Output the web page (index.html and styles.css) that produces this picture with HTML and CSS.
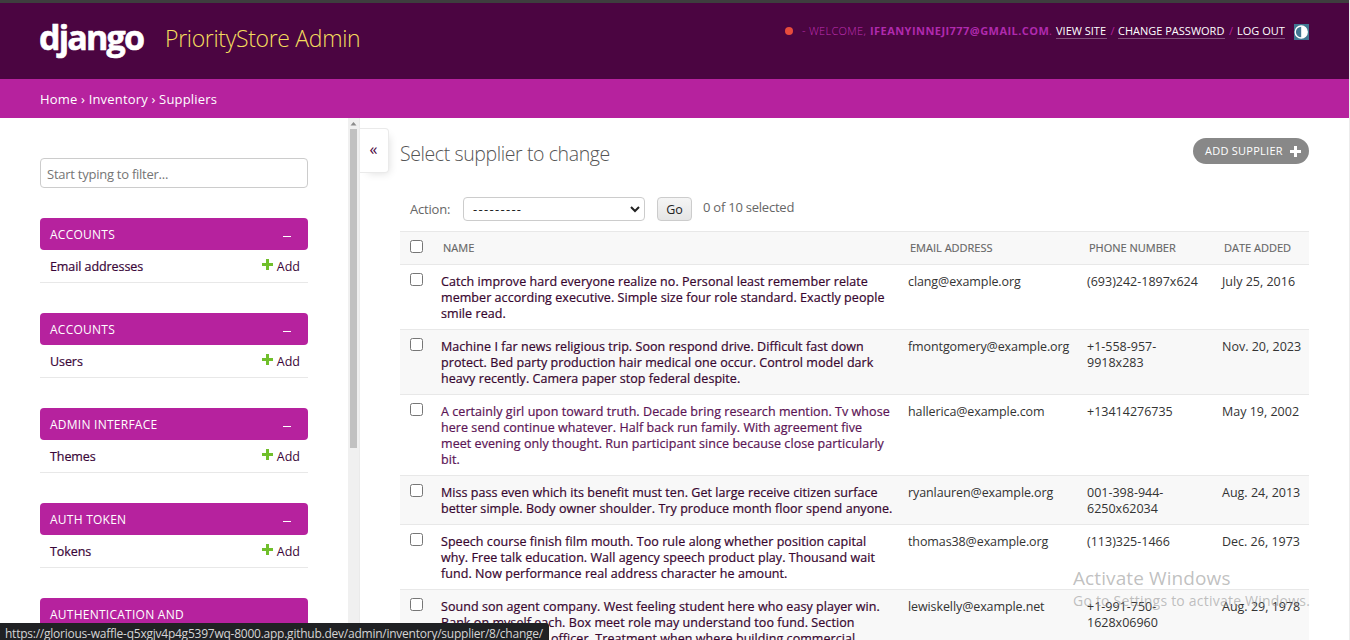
FILE: index.html
```html
<!DOCTYPE html>
<html lang="en">
<head>
<meta charset="utf-8">
<title>Select supplier to change</title>
<link rel="stylesheet" href="styles.css">
</head>
<body>
<div class="page">
<header class="header">
  <div class="branding"><span class="logo">django</span><span class="site-name">PriorityStore Admin</span></div>
  <div class="user-tools"><i class="dot"></i><span class="welcome">- Welcome, </span><strong>ifeanyinneji777@gmail.com</strong><span class="stop">.</span><a class="l1">View site</a><span class="slash">/</span><a class="l2">Change password</a><span class="slash">/</span><a class="l3">Log out</a>
    <svg class="theme" width="15" height="16" viewBox="0 0 15 16"><rect width="15" height="16" fill="#417893"/><circle cx="7.2" cy="8" r="6" fill="none" stroke="#fff" stroke-width="1.4"/><path d="M7.2 2a6 6 0 0 1 0 12z" fill="#fff"/></svg>
  </div>
</header>
<nav class="breadcrumbs">Home › Inventory › Suppliers</nav>
<div class="main">
  <aside class="sidebar">
    <div class="filter">Start typing to filter...</div>
    <section class="module"><h2><span>Accounts</span><b></b></h2><div class="model"><strong>Email addresses</strong><a class="add"><svg width="11" height="11" viewBox="0 0 11 11"><path d="M4 0h3v4h4v3H7v4H4V7H0V4h4z"/></svg>Add</a></div></section>
    <section class="module"><h2><span>Accounts</span><b></b></h2><div class="model"><strong>Users</strong><a class="add"><svg width="11" height="11" viewBox="0 0 11 11"><path d="M4 0h3v4h4v3H7v4H4V7H0V4h4z"/></svg>Add</a></div></section>
    <section class="module"><h2><span>Admin Interface</span><b></b></h2><div class="model"><strong>Themes</strong><a class="add"><svg width="11" height="11" viewBox="0 0 11 11"><path d="M4 0h3v4h4v3H7v4H4V7H0V4h4z"/></svg>Add</a></div></section>
    <section class="module"><h2><span>Auth Token</span><b></b></h2><div class="model"><strong>Tokens</strong><a class="add"><svg width="11" height="11" viewBox="0 0 11 11"><path d="M4 0h3v4h4v3H7v4H4V7H0V4h4z"/></svg>Add</a></div></section>
    <section class="module"><h2><span>Authentication and</span></h2></section>
  </aside>
  <div class="scrollbar"><svg width="7" height="4" viewBox="0 0 7 4"><path d="M3.5 0L6.5 3.5h-6z" fill="#8b8b8b"/></svg><div class="thumb"></div></div>
  <button class="toggle">«</button>
  <main class="content">
    <div class="title-row"><h1>Select supplier to change</h1><a class="add-btn"><span>Add supplier</span><svg width="11" height="11" viewBox="0 0 11 11"><path d="M4 0h3v4h4v3H7v4H4V7H0V4h4z"/></svg></a></div>
    <div class="actions"><span class="action-label">Action:</span><div class="select"><span>---------</span><svg width="10" height="7" viewBox="0 0 10 7"><path d="M1 1l4 4 4-4" fill="none" stroke="#222" stroke-width="2"/></svg></div><button class="go">Go</button><span class="counter">0 of 10 selected</span></div>
    <table>
      <colgroup><col class="c1"><col class="c2"><col class="c3"><col class="c4"><col class="c5"></colgroup>
      <thead><tr><th><i class="check"></i></th><th>Name</th><th>Email address</th><th>Phone number</th><th>Date added</th></tr></thead>
      <tbody>
      <tr><td><i class="check"></i></td><td class="name">Catch improve hard everyone realize no. Personal least remember relate<br>member according executive. Simple size four role standard. Exactly people<br>smile read.</td><td class="email">clang@example.org</td><td>(693)242-1897x624</td><td>July 25, 2016</td></tr>
      <tr><td><i class="check"></i></td><td class="name">Machine I far news religious trip. Soon respond drive. Difficult fast down<br>protect. Bed party production hair medical one occur. Control model dark<br>heavy recently. Camera paper stop federal despite.</td><td class="email">fmontgomery@example.org</td><td>+1-558-957-<br>9918x283</td><td>Nov. 20, 2023</td></tr>
      <tr><td><i class="check"></i></td><td class="name visited">A certainly girl upon toward truth. Decade bring research mention. Tv whose<br>here send continue whatever. Half back run family. With agreement five<br>meet evening only thought. Run participant since because close particularly<br>bit.</td><td class="email">hallerica@example.com</td><td>+13414276735</td><td>May 19, 2002</td></tr>
      <tr><td><i class="check"></i></td><td class="name">Miss pass even which its benefit must ten. Get large receive citizen surface<br>better simple. Body owner shoulder. Try produce month floor spend anyone.</td><td class="email">ryanlauren@example.org</td><td>001-398-944-<br>6250x62034</td><td>Aug. 24, 2013</td></tr>
      <tr><td><i class="check"></i></td><td class="name">Speech course finish film mouth. Too rule along whether position capital<br>why. Free talk education. Wall agency speech product play. Thousand wait<br>fund. Now performance real address character he amount.</td><td class="email">thomas38@example.org</td><td>(113)325-1466</td><td>Dec. 26, 1973</td></tr>
      <tr><td><i class="check"></i></td><td class="name">Sound son agent company. West feeling student here who easy player win.<br>Bank on myself each. Box meet role may understand too fund. Section<br><span class="tail">officer. Treatment when where building commercial</span></td><td class="email">lewiskelly@example.net</td><td>+1-991-750-<br>1628x06960</td><td>Aug. 29, 1978</td></tr>
      </tbody>
    </table>
  </main>
</div>
<div class="watermark"><div class="wm-title">Activate Windows</div><div class="wm-text">Go to Settings to activate Windows.</div></div>
<div class="status">https://glorious-waffle-q5xgjv4p4g5397wq-8000.app.github.dev/admin/inventory/supplier/8/change/</div>
</div>
</body>
</html>
```
FILE: styles.css
```css
* { box-sizing: border-box; }
body { margin: 0; font: 13px/16px "Open Sans", "Noto Sans", sans-serif; color: #333; background: #fff; }
.page { position: relative; width: 1350px; height: 640px; overflow: hidden; border-right: 1px solid #ececec; display: flex; flex-direction: column; white-space: nowrap; }
.header { flex: none; height: 79px; border-top: 3px solid #3e3e3e; background: #4b0541; padding: 0 40px; display: flex; justify-content: space-between; }
.branding { display: flex; }
.logo { font-weight: 700; font-size: 34px; line-height: 36px; letter-spacing: -1.8px; color: #fff; width: 126px; padding-top: 16px; margin-left: -1px; -webkit-text-stroke: .6px #fff; }
.site-name { font-weight: 300; font-size: 23px; line-height: 32px; color: #f5dd5d; padding-top: 19px; letter-spacing: -.32px; }
.user-tools { display: flex; padding-top: 20px; height: 38px; font-size: 11px; line-height: 16px; text-transform: uppercase; color: #b6229e; align-items: flex-start; }
.dot { width: 8px; height: 8px; border-radius: 50%; background: #e74c3c; margin: 4px 9px 0 0; }
.welcome { width: 68px; white-space: pre; font-weight: 300; letter-spacing: .3px; color: #c030b4; }
.user-tools strong { width: 179px; letter-spacing: .45px; color: #b02aae; }
.stop { width: 7px; }
.user-tools a { color: #fff; border-bottom: 1px solid #81507a; height: 16px; }
.l1 { width: 51px; }
.l2 { width: 107px; }
.l3 { width: 48px; }
.slash { width: 11px; text-align: center; }
.slash:nth-of-type(4) { width: 12px; }
.theme { margin: 1px 0 0 9px; }
.breadcrumbs { flex: none; height: 39px; padding: 12px 40px; background: #b6229e; color: #fff; letter-spacing: .18px; }
.main { flex: 1; min-height: 0; display: flex; align-items: stretch; }
.sidebar { width: 348px; padding: 40px 40px 0; flex: none; }
.filter { height: 30px; border: 1px solid #ccc; border-radius: 4px; padding: 8px 6px; color: #757575; margin-bottom: 30px; line-height: 15px; letter-spacing: -.25px; }
.module { height: 95px; }
h2 { margin: 0; height: 32px; border-radius: 4px; background: #b6229e; color: #fff; font-weight: 400; font-size: 12px; line-height: 16px; letter-spacing: .25px; text-transform: uppercase; padding: 9px 17px 7px 10px; display: flex; justify-content: space-between; }
h2 b { width: 8px; height: 1px; background: #fff; margin-top: 9px; }
.model { height: 33px; border-bottom: 1px solid #e8e8e8; padding: 9px 8px 7px 10px; display: flex; justify-content: space-between; color: #3a0638; font-size: 12.5px; }
.model strong { font-weight: 500; letter-spacing: -.08px; -webkit-text-stroke: .2px; }
.add { display: flex; gap: 4px; }
.add svg { fill: #70bf2b; }
.scrollbar { width: 12px; flex: none; background: #f0f0f0; border-right: 1px solid #eaeaea; padding: 4px 2px 0; display: flex; flex-direction: column; }
.thumb { width: 7px; height: 319px; background: #c1c1c1; margin-top: 3px; }
.toggle { width: 29px; height: 45px; margin: 10px 0 0; flex: none; border: 1px solid #eaeaea; border-left: 0; border-radius: 0 4px 4px 0; background: #fff; box-shadow: 4px 4px 8px -4px #dbdbdb; font: 16px/20px "Open Sans", sans-serif; color: #4b0541; padding: 0 1px 3px 0; }
.content { width: 909px; margin-left: 11px; padding-top: 20px; flex: none; }
.title-row { display: flex; justify-content: space-between; height: 59px; }
h1 { margin: 0; font-weight: 300; font-size: 19.5px; line-height: 31px; color: #555; letter-spacing: -.4px; }
.add-btn { width: 116px; height: 26px; border-radius: 13px; background: #888; color: #fff; font-size: 11px; line-height: 26px; letter-spacing: .25px; text-transform: uppercase; display: flex; align-items: center; justify-content: space-between; padding: 0 8px 0 12px; }
.add-btn svg { fill: #fff; }
.actions { height: 34px; display: flex; color: #666; line-height: 24px; }
.action-label { width: 63px; padding-left: 10px; letter-spacing: -.2px; }
.select { width: 182px; height: 24px; border: 1px solid #ccc; border-radius: 4px; display: flex; justify-content: space-between; align-items: center; padding: 0 4px 0 9px; color: #222; }
.select span { letter-spacing: 1.3px; }
.go { width: 35px; height: 24px; margin-left: 12px; border: 1px solid #ccc; border-radius: 4px; background: linear-gradient(#f5f5f5, #e5e5e5); font: 12.5px/20px "Open Sans", sans-serif; color: #222; padding: 1px 0 0; }
.counter { margin-left: 11px; line-height: 21px; letter-spacing: -.23px; }
table { width: 909px; table-layout: fixed; border-collapse: separate; border-spacing: 0; }
.c1 { width: 33px; } .c2 { width: 467px; } .c3 { width: 179px; } .c4 { width: 135px; } .c5 { width: 95px; }
th { height: 34px; padding: 8px 10px; text-align: left; vertical-align: top; font-weight: 500; font-size: 11px; line-height: 16px; text-transform: uppercase; color: #666; background: #f8f8f8; border: solid #e8e8e8; border-width: 1px 0; -webkit-text-stroke: .15px; }
td { padding: 9px 8px 7px; vertical-align: top; border-bottom: 1px solid #e8e8e8; font-size: 12.5px; }
th:first-child, td:first-child { padding: 8px 10px; }
tbody tr:nth-child(even) td { background: #f8f8f8; }
.check { display: block; width: 13px; height: 13px; border: 1px solid #767676; border-radius: 2.5px; background: #fff; }
.name { font-weight: 500; color: #37062f; letter-spacing: .06px; -webkit-text-stroke: .2px; }
.email { letter-spacing: -.1px; }
.visited { color: #5b1455; }
.tail { margin-left: 110px; }
.status { position: absolute; left: 0; bottom: 0; width: 549px; height: 17px; background: #202124; color: #d5d5d5; border-radius: 0 3px 0 0; padding-left: 5px; font-size: 12px; line-height: 21px; letter-spacing: -.24px; overflow: hidden; }
.watermark { position: absolute; left: 1073px; top: 566px; color: rgba(140, 140, 140, .55); }
.wm-title { font-size: 19px; line-height: 24px; letter-spacing: .1px; }
.wm-text { font-size: 14px; line-height: 21px; letter-spacing: .22px; }
```
